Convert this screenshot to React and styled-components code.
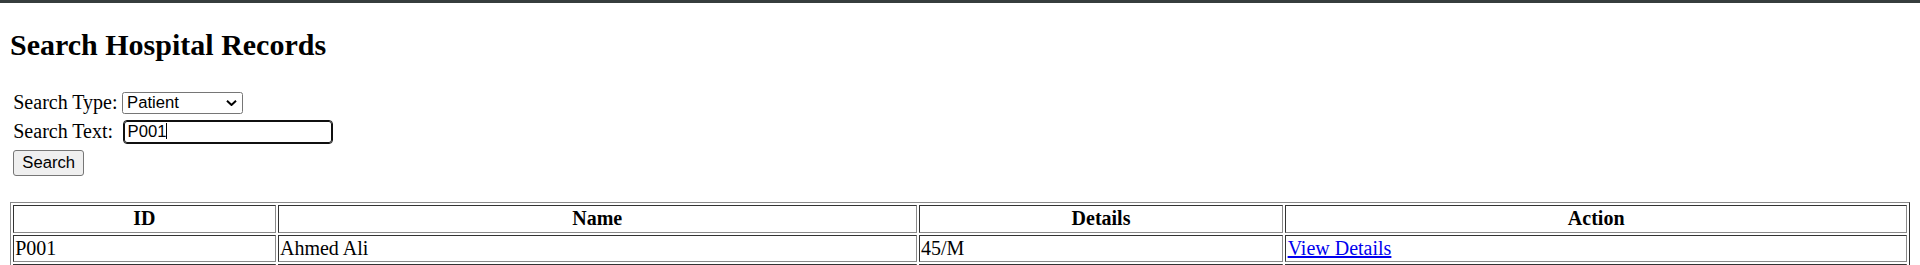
import React from "react";
import styled, { createGlobalStyle } from "styled-components";

const GlobalStyle = createGlobalStyle`
  html, body {
    margin: 0;
    padding: 0;
    background: #ffffff;
  }
  body {
    font-family: "Liberation Serif", "Times New Roman", serif;
    font-size: 20px;
    color: #000000;
  }
`;

const TopBar = styled.div`
  height: 3px;
  background: #363d3d;
`;

const Page = styled.main`
  padding: 0 10px;
`;

const Title = styled.h2`
  font-size: 30px;
  font-weight: bold;
  line-height: normal;
  margin: 24.9px 0 24.9px;
`;

const FormTable = styled.table`
  border-spacing: 2.5px;
  border-collapse: separate;
`;

const FormCell = styled.td`
  padding: 1.25px;
  white-space: nowrap;
  vertical-align: middle;
  padding-top: ${(p) => (p.$pushTop ? "3px" : "1.25px")};
  padding-bottom: ${(p) => (p.$pushTop ? "2.25px" : "1.25px")};
`;

const SelectWrap = styled.span`
  position: relative;
  display: inline-block;
  vertical-align: middle;
`;

const Select = styled.select`
  appearance: none;
  -webkit-appearance: none;
  display: block;
  box-sizing: border-box;
  width: 121px;
  height: 22px;
  margin: 0;
  padding: 0 20px 0 4px;
  border: 1px solid #767676;
  border-radius: 2.5px;
  background: #ffffff;
  color: #000000;
  font-family: "Liberation Sans", Arial, sans-serif;
  font-size: 16.67px;
  line-height: 20px;
`;

const Chevron = styled.svg`
  position: absolute;
  right: 6px;
  top: 8px;
  width: 11px;
  height: 6px;
  pointer-events: none;
`;

const InputWrap = styled.span`
  position: relative;
  display: inline-block;
  vertical-align: middle;
  margin-left: 1.5px;
`;

const TextInput = styled.input`
  display: block;
  box-sizing: border-box;
  width: 208px;
  height: 22px;
  margin: 0;
  padding: 0 3px;
  border: 1px solid #101010;
  border-radius: 3px;
  outline: 1.6px solid #101010;
  outline-offset: 0;
  background: #ffffff;
  color: #000000;
  font-family: "Liberation Sans", Arial, sans-serif;
  font-size: 16.67px;
  caret-color: transparent;
`;

const Caret = styled.span`
  position: absolute;
  left: 42.5px;
  top: 1.5px;
  width: 1px;
  height: 16.5px;
  background: #000000;
`;

const Button = styled.button`
  box-sizing: border-box;
  width: 71px;
  height: 25.5px;
  margin: 0;
  padding: 0;
  border: 1px solid #767676;
  border-radius: 3px;
  background: #efefef;
  color: #000000;
  font-family: "Liberation Sans", Arial, sans-serif;
  font-size: 16.67px;
  vertical-align: middle;
`;

const DataTable = styled.table`
  width: 100%;
  box-sizing: border-box;
  table-layout: fixed;
  border-collapse: separate;
  border-spacing: 2.5px;
  border: 1px solid;
  border-color: #8a8a8a #333333 #333333 #8a8a8a;
  margin-top: 22px;
`;

const HeadCell = styled.th`
  box-sizing: border-box;
  width: ${(p) => p.$w || "auto"};
  padding: 1.25px;
  border: 1px solid;
  border-color: #333333 #8a8a8a #8a8a8a #333333;
  font-weight: bold;
  text-align: center;
  vertical-align: middle;
  line-height: normal;
`;

const Cell = styled.td`
  box-sizing: border-box;
  padding: 1.25px;
  border: 1px solid;
  border-color: #333333 #8a8a8a #8a8a8a #333333;
  text-align: left;
  vertical-align: middle;
  line-height: normal;
`;

const DetailLink = styled.a`
  color: #0000ee;
  text-decoration: underline;
  cursor: pointer;
`;

const columns = [
  { key: "id", label: "ID", w: "262.7px" },
  { key: "name", label: "Name", w: "639px" },
  { key: "details", label: "Details", w: "364.7px" },
  { key: "action", label: "Action" },
];

const rows = [
  { id: "P001", name: "Ahmed Ali", details: "45/M" },
  { id: "P0010", name: "Sara Khan", details: "32/F" },
];

export default function App() {
  return (
    <>
      <GlobalStyle />
      <TopBar />
      <Page>
        <Title>Search Hospital Records</Title>
        <form onSubmit={(e) => e.preventDefault()}>
          <FormTable>
            <tbody>
              <tr>
                <FormCell>Search Type:</FormCell>
                <FormCell>
                  <SelectWrap>
                    <Select defaultValue="patient">
                      <option value="patient">Patient</option>
                      <option value="doctor">Doctor</option>
                      <option value="appointment">Appointment</option>
                    </Select>
                    <Chevron viewBox="0 0 11 6" aria-hidden="true">
                      <path
                        d="M1 0.8 L5.5 5 L10 0.8"
                        fill="none"
                        stroke="#000"
                        strokeWidth="2"
                      />
                    </Chevron>
                  </SelectWrap>
                </FormCell>
              </tr>
              <tr>
                <FormCell>Search Text:</FormCell>
                <FormCell>
                  <InputWrap>
                    <TextInput type="text" defaultValue="P001" />
                    <Caret />
                  </InputWrap>
                </FormCell>
              </tr>
              <tr>
                <FormCell colSpan={2} $pushTop>
                  <Button type="submit">Search</Button>
                </FormCell>
              </tr>
            </tbody>
          </FormTable>
        </form>
        <DataTable>
          <thead>
            <tr>
              {columns.map((c) => (
                <HeadCell key={c.key} $w={c.w}>
                  {c.label}
                </HeadCell>
              ))}
            </tr>
          </thead>
          <tbody>
            {rows.map((r) => (
              <tr key={r.id}>
                <Cell>{r.id}</Cell>
                <Cell>{r.name}</Cell>
                <Cell>{r.details}</Cell>
                <Cell>
                  <DetailLink href="#">View Details</DetailLink>
                </Cell>
              </tr>
            ))}
          </tbody>
        </DataTable>
      </Page>
    </>
  );
}
